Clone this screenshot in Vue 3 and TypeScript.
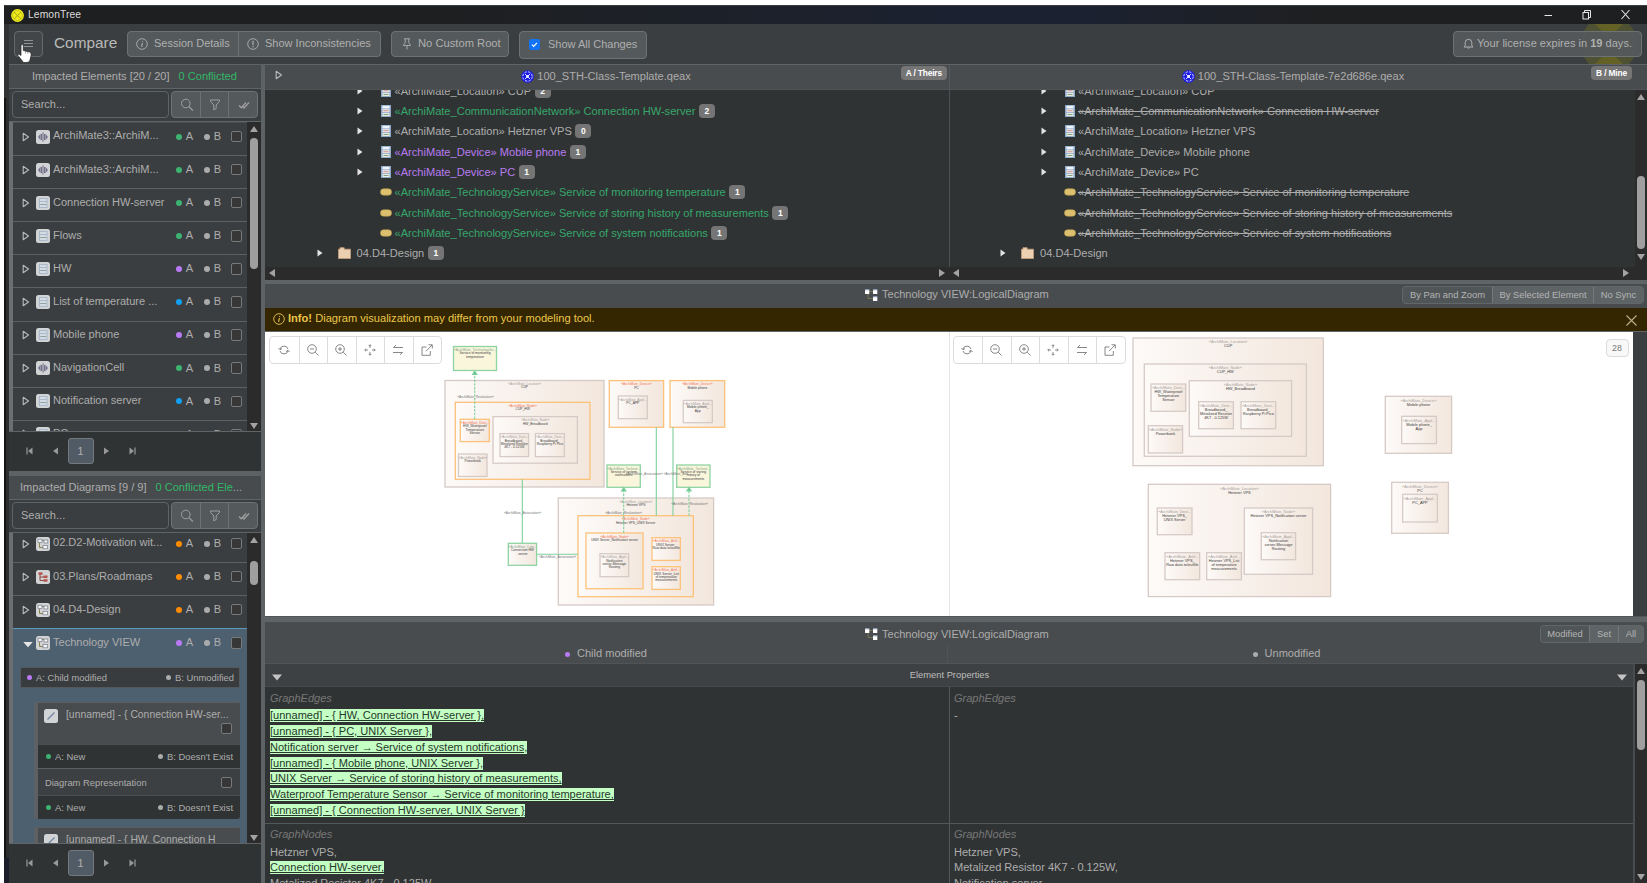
<script setup lang="ts">
interface ListItem { label: string; kind: string; color: string }
interface TreeRow { label: string; kind: string; color: string; count?: number; gone?: boolean }
interface DiagramNode {
  x: number; y: number; w: number; h: number
  st: string; lines: string[]; tone?: string; fill?: string
}

const elements: ListItem[] = [
  { label: 'ArchiMate3::ArchiM...', kind: 'code', color: 'green' },
  { label: 'ArchiMate3::ArchiM...', kind: 'code', color: 'green' },
  { label: 'Connection HW-server', kind: 'doc', color: 'green' },
  { label: 'Flows', kind: 'doc', color: 'green' },
  { label: 'HW', kind: 'doc', color: 'purple' },
  { label: 'List of temperature ...', kind: 'doc', color: 'blue' },
  { label: 'Mobile phone', kind: 'doc', color: 'purple' },
  { label: 'NavigationCell', kind: 'code', color: 'green' },
  { label: 'Notification server', kind: 'doc', color: 'blue' },
  { label: 'PC', kind: 'doc', color: 'purple' },
]

const diagrams: ListItem[] = [
  { label: '02.D2-Motivation wit...', kind: 'dia', color: 'orange' },
  { label: '03.Plans/Roadmaps', kind: 'plan', color: 'orange' },
  { label: '04.D4-Design', kind: 'dia', color: 'orange' },
]

const treeA: TreeRow[] = [
  { label: '«ArchiMate_Location» CUP', kind: 'doc', color: 'grey', count: 2 },
  { label: '«ArchiMate_CommunicationNetwork» Connection HW-server', kind: 'doc', color: 'green', count: 2 },
  { label: '«ArchiMate_Location» Hetzner VPS', kind: 'doc', color: 'grey', count: 0 },
  { label: '«ArchiMate_Device» Mobile phone', kind: 'doc', color: 'purple', count: 1 },
  { label: '«ArchiMate_Device» PC', kind: 'doc', color: 'purple', count: 1 },
  { label: '«ArchiMate_TechnologyService» Service of monitoring temperature', kind: 'svc', color: 'green', count: 1 },
  { label: '«ArchiMate_TechnologyService» Service of storing history of measurements', kind: 'svc', color: 'green', count: 1 },
  { label: '«ArchiMate_TechnologyService» Service of system notifications', kind: 'svc', color: 'green', count: 1 },
  { label: '04.D4-Design', kind: 'folder', color: 'grey', count: 1 },
]
const treeB: TreeRow[] = treeA.map((r) => ({
  label: r.label, kind: r.kind, color: 'grey', gone: r.color === 'green',
}))
const trees = [treeA, treeB]

const loc = '«ArchiMate_Location»'
const node = '«ArchiMate_Node»'
const dev = '«ArchiMate_Device»'
const devS = '«ArchiMate_Devi...'
const appS = '«ArchiMate_Appl...'
const artS = '«ArchiMate_Artif...'

const nodesA: DiagramNode[] = [
  { x: 453.5, y: 346.5, w: 43, h: 24, st: '«ArchiMate_TechnologySe...', lines: ['Service of monitoring', 'temperature'], tone: 'new', fill: '#faf6dc' },
  { x: 445, y: 380.5, w: 159, h: 106.5, st: loc, lines: ['CUP'] },
  { x: 455.3, y: 402.3, w: 134.7, h: 77, st: node, lines: ['CUP_HW'], tone: 'mod' },
  { x: 460.3, y: 419.3, w: 29, h: 22.3, st: devS, lines: ['HW_Waterproof', 'Temperature', 'Sensor'], tone: 'mod' },
  { x: 458.5, y: 454, w: 28.5, h: 22.5, st: node, lines: ['Powerbank'] },
  { x: 493, y: 416.6, w: 84.4, h: 46.6, st: node, lines: ['HW_Breadboard'] },
  { x: 500, y: 433.6, w: 28.6, h: 23, st: devS, lines: ['Breadboard_', 'Metalized Resistor', '4K7 - 0.125W'] },
  { x: 535.4, y: 433.6, w: 29, h: 23, st: devS, lines: ['Breadboard_', 'Raspberry Pi Pico'] },
  { x: 609.3, y: 380.6, w: 54.3, h: 46.7, st: dev, lines: ['PC'], tone: 'mod' },
  { x: 618.3, y: 396, w: 29, h: 22.7, st: appS, lines: ['PC_APP'] },
  { x: 670, y: 380.6, w: 54.7, h: 46.7, st: dev, lines: ['Mobile phone'], tone: 'mod' },
  { x: 683.3, y: 400.4, w: 29, h: 22.3, st: appS, lines: ['Mobile phone_', 'App'] },
  { x: 508.3, y: 543.3, w: 28.3, h: 22, st: '«ArchiMate_Com...', lines: ['Connection HW', '-server'], tone: 'new' },
  { x: 558.3, y: 498, w: 155.3, h: 107, st: loc, lines: ['Hetzner VPS'] },
  { x: 578, y: 515.7, w: 115.3, h: 81, st: node, lines: ['Hetzner VPS_UNIX Server'], tone: 'mod' },
  { x: 586, y: 533, w: 57, h: 55.7, st: node, lines: ['UNIX Server_Notification server'], tone: 'mod' },
  { x: 600, y: 553.7, w: 28.7, h: 23, st: appS, lines: ['Notification', 'server-Message', 'Routing'] },
  { x: 652, y: 537.7, w: 28.3, h: 22.7, st: artS, lines: ['UNIX Server_', 'Raw data to/outfile'], tone: 'mod' },
  { x: 652, y: 566.7, w: 28.3, h: 22.7, st: artS, lines: ['UNIX Server_List', 'of temperature', 'measurements'], tone: 'mod' },
  { x: 607, y: 465, w: 33.3, h: 22.3, st: '«ArchiMate_Technol...', lines: ['Service of system', 'notifications'], tone: 'new', fill: '#faf6dc' },
  { x: 676.7, y: 465, w: 33.3, h: 22.3, st: '«ArchiMate_Technol...', lines: ['Service of storing', 'history of', 'measurements'], tone: 'new', fill: '#faf6dc' },
]

const nodesB: DiagramNode[] = [
  { x: 1133, y: 338, w: 190.3, h: 127.7, st: loc, lines: ['CUP'] },
  { x: 1144.3, y: 364, w: 162, h: 92.3, st: node, lines: ['CUP_HW'] },
  { x: 1151, y: 384, w: 34.7, h: 27.3, st: devS, lines: ['HW_Waterproof', 'Temperature', 'Sensor'] },
  { x: 1148.3, y: 425.7, w: 34.3, h: 27.3, st: node, lines: ['Powerbank'] },
  { x: 1189.3, y: 380.7, w: 102.3, h: 55.7, st: node, lines: ['HW_Breadboard'] },
  { x: 1198.7, y: 401.7, w: 34.7, h: 27, st: devS, lines: ['Breadboard_', 'Metalized Resistor', '4K7 - 0.125W'] },
  { x: 1241, y: 401.7, w: 34.7, h: 27, st: devS, lines: ['Breadboard_', 'Raspberry Pi Pico'] },
  { x: 1385.3, y: 396.3, w: 66.3, h: 57, st: dev, lines: ['Mobile phone'] },
  { x: 1401.7, y: 416.3, w: 34.7, h: 27.3, st: appS, lines: ['Mobile phone_', 'App'] },
  { x: 1148.3, y: 484.3, w: 182.3, h: 112.3, st: loc, lines: ['Hetzner VPS'] },
  { x: 1157.3, y: 508, w: 34.7, h: 26.7, st: devS, lines: ['Hetzner VPS_', 'UNIX Server'] },
  { x: 1244.3, y: 508, w: 68.3, h: 66.3, st: node, lines: ['Hetzner VPS_Notification server'] },
  { x: 1261.3, y: 532.7, w: 34.3, h: 27, st: appS, lines: ['Notification', 'server-Message', 'Routing'] },
  { x: 1165, y: 552.7, w: 34.7, h: 27, st: artS, lines: ['Hetzner VPS_', 'Raw data to/outfile'] },
  { x: 1206.7, y: 552.7, w: 34.7, h: 27, st: artS, lines: ['Hetzner VPS_List', 'of temperature', 'measurements'] },
  { x: 1391.7, y: 482.3, w: 56.7, h: 51, st: dev, lines: ['PC'] },
  { x: 1402.7, y: 494.3, w: 34.7, h: 27.7, st: appS, lines: ['PC_APP'] },
]
const canvases = [
  { box: '265 332 685 284', nodes: nodesA, size: 3.3, step: 3.3, first: 4.6 },
  { box: '950 332 685 284', nodes: nodesB, size: 3.9, step: 4, first: 5.4 },
]

const edgeLabels = [
  { x: 475.5, y: 397.5, t: '«ArchiMate_Realization»' },
  { x: 522.5, y: 514, t: '«ArchiMate_Association»' },
  { x: 557.5, y: 557.5, t: '«ArchiMate_Association»' },
  { x: 658, y: 474.5, t: '«ArchiMate_Association» «ArchiMate_Ass...' },
  { x: 623.5, y: 513.5, t: '«ArchiMate_Realization»' },
  { x: 689.5, y: 505, t: '«ArchiMate_Realization»' },
]

const stroke: Record<string, string> = { new: '#8fd3a3', mod: '#fcc27a', none: '#d6cac6' }
const stTone: Record<string, string> = { new: '#7fa487', mod: '#f4714f', none: '#a7a09c' }

const edges = [
  '[unnamed] - { HW, Connection HW-server },',
  '[unnamed] - { PC, UNIX Server },',
  'Notification server → Service of system notifications,',
  '[unnamed] - { Mobile phone, UNIX Server },',
  'UNIX Server → Service of storing history of measurements,',
  'Waterproof Temperature Sensor → Service of monitoring temperature,',
  '[unnamed] - { Connection HW-server, UNIX Server }',
]
</script>

<template>
  <div class="page">
    <svg width="0" height="0" class="defs">
      <defs>
        <linearGradient id="sand"><stop offset="0" stop-color="#fdfaf8" /><stop offset="0.45" stop-color="#f8f1ec" /><stop offset="1" stop-color="#f3e7dd" /></linearGradient>
        <symbol id="i-doc" viewBox="0 0 10 12"><rect x="0" y="0" width="10" height="12" fill="#8fabcb" /><rect x="1.500" y="0.800" width="7" height="2.600" fill="#eef5fa" /><rect x="1.500" y="4.200" width="7" height="3" fill="#f0e4e0" /><rect x="2.500" y="5.200" width="5" height="1" fill="#c99" /><rect x="1.500" y="8" width="7" height="3" fill="#e6efe0" /><rect x="2.500" y="9" width="5" height="1" fill="#8a9a88" /></symbol>
        <symbol id="i-svc" viewBox="0 0 12 8"><rect x="0.500" y="0.800" width="11" height="6.400" rx="3" fill="#dcc070" stroke="#b99c4c" stroke-width=".6" /></symbol>
        <symbol id="i-folder" viewBox="0 0 13 12"><path d="M0.500 11.500V2.200H2V.7H6.200V2.200H12.500V11.500Z" fill="#ecd0b2" stroke="#c89f7c" stroke-width=".8" /></symbol>
        <symbol id="k-code" viewBox="0 0 14 14"><rect width="14" height="14" rx="2.500" fill="#d2d3d5" /><path d="M4.600 3.400 2 7l2.600 3.600ZM9.400 3.400 12 7l-2.600 3.600Z" fill="#77748f" /><path d="M7 2.300V11.700M5.500 4V10M8.500 4V10" stroke="#55546f" stroke-width=".8" /></symbol>
        <symbol id="k-doc" viewBox="0 0 14 14"><rect width="14" height="14" rx="2.500" fill="#d2d3d5" /><rect x="3" y="2" width="8.500" height="10" fill="#a9b9cb" /><path d="M4 4h6.500M4 7h6.500M4 10h6.500" stroke="#dfe7ea" stroke-width="1.500" /><path d="M4.500 8.500h5.500" stroke="#8b9a90" stroke-width=".8" /></symbol>
        <symbol id="k-dia" viewBox="0 0 14 14"><rect width="14" height="14" rx="2.500" fill="#d2d3d5" /><path d="M3.500 6V10.500H7M5 3.500H9" stroke="#8a8450" fill="none" /><rect x="2" y="2.200" width="4" height="3.200" fill="#f4f4f4" stroke="#767d8a" stroke-width=".7" /><rect x="8" y="3" width="3.800" height="3" fill="#f4f4f4" stroke="#767d8a" stroke-width=".7" /><rect x="7" y="8.500" width="4.500" height="3.300" fill="#f4f4f4" stroke="#767d8a" stroke-width=".7" /></symbol>
        <symbol id="k-plan" viewBox="0 0 14 14"><rect width="14" height="14" rx="2.500" fill="#d2d3d5" /><path d="M4 4V10.500H8M4 7H8" stroke="#8d4a42" fill="none" /><rect x="2.500" y="2.300" width="4" height="2.500" fill="#b5544a" /><rect x="7.500" y="5.500" width="4" height="2.500" fill="#b5544a" /><rect x="7.500" y="9.200" width="4" height="2.500" fill="#b5544a" /></symbol>
        <symbol id="k-line" viewBox="0 0 14 14"><rect width="14" height="14" rx="2.500" fill="#d2d3d5" /><path d="M3.500 10.500 10.500 3.500" stroke="#6f84a4" stroke-width="1.200" /></symbol>
        <symbol id="i-caret" viewBox="0 0 8 10"><path d="M1.200 1.300 6.500 5 1.200 8.700Z" fill="none" stroke="#b9b9b9" stroke-width="1.100" stroke-linejoin="round" /></symbol>
        <symbol id="i-tri" viewBox="0 0 6 8"><path d="M.5.500 5.500 4 .5 7.500Z" fill="#e3e3e3" /></symbol>
        <symbol id="i-ea" viewBox="0 0 13 13"><circle cx="6.500" cy="6.500" r="6.300" fill="#1a1ae0" /><g fill="none" stroke="#dcdcff" stroke-width="1"><circle cx="6.500" cy="6.500" r="4.700" stroke-dasharray="2.400 1.300" /><path d="M4 4 9 9M9 4 4 9" /></g><circle cx="6.500" cy="6.500" r="1.400" fill="#f0f0ff" /></symbol>
        <symbol id="i-tree" viewBox="0 0 13 13"><path d="M3 4V9.500H8M4 2.500H8" stroke="#8a8552" fill="none" stroke-width=".7" /><rect x="0" y="0.500" width="4.300" height="4.500" fill="#fff" /><rect x="8" y="0.500" width="4.300" height="4.500" fill="#fff" /><rect x="8" y="7.500" width="4.300" height="4.500" fill="#fff" /><path d="M0 .8H4.300M8 .8H12.300M8 7.800H12.300" stroke="#7b8fb5" stroke-width=".8" /></symbol>
        <symbol id="i-lemon" viewBox="0 0 14 14"><circle cx="7" cy="7" r="6.900" fill="#f2ee1c" /><circle cx="7" cy="7" r="5.200" fill="none" stroke="#b8b515" stroke-width=".8" /><path d="M3.400 3.400 10.600 10.600M10.600 3.400 3.400 10.600" stroke="#b8b515" stroke-width="1.200" /></symbol>
        <symbol id="i-search" viewBox="0 0 14 14"><circle cx="5.800" cy="5.500" r="4.300" fill="none" stroke="currentColor" stroke-width="1" /><path d="m9 8.700 3.800 3.800" stroke="currentColor" stroke-width="1.200" /></symbol>
        <symbol id="i-funnel" viewBox="0 0 12 12"><path d="M1.500 1H10.500V2.300L7.200 6V9.500L4.800 10.800V6L1.500 2.300Z" fill="none" stroke="currentColor" stroke-width="1" /></symbol>
        <symbol id="i-checks" viewBox="0 0 12 10"><path d="m1 5.500 2.300 2.300L8 2.500M4.500 6.500 6 8 11 2.500" fill="none" stroke="currentColor" stroke-width="1.300" /></symbol>
        <symbol id="i-info" viewBox="0 0 12 12"><circle cx="6" cy="6" r="5.300" fill="none" stroke="currentColor" stroke-width=".9" /><path d="M6.400 5 5.600 8.800M6.600 3 6.500 3.900" stroke="currentColor" stroke-width="1.100" /></symbol>
        <symbol id="i-warn" viewBox="0 0 12 12"><circle cx="6" cy="6" r="5.300" fill="none" stroke="currentColor" stroke-width=".9" /><path d="M6 2.800V7M6 8V9.200" stroke="currentColor" stroke-width="1.200" /></symbol>
        <symbol id="i-pin" viewBox="0 0 10 12"><path d="M2 .8H8M3.200 1V5L1.500 6.800V7.500H8.500V6.800L6.800 5V1M5 7.500V11.500" fill="none" stroke="currentColor" stroke-width=".9" /></symbol>
        <symbol id="i-bell" viewBox="0 0 11 12"><path d="M1 9H10L8.800 7.300V4.600A3.300 3.300 0 0 0 2.200 4.600V7.300ZM4.300 9.500A1.300 1.300 0 0 0 6.700 9.500" fill="none" stroke="currentColor" stroke-width="1" /></symbol>
      </defs>
    </svg>

    <div class="edge"><i class="e1"></i><i class="e2"></i><i class="e3"></i></div>

    <div class="window">
      <div class="titlebar">
        <svg class="logo"><use href="#i-lemon" /></svg>
        <span class="apptitle">LemonTree</span>
        <svg class="wc" viewBox="0 0 90 14" fill="none" stroke="#e6e6e6">
          <path d="M.5 7.500H8" stroke-width="1" /><rect x="39" y="4.500" width="5.500" height="6.500" /><path d="M40.500 4.500V2.500H46.500V9.500H44.500" /><path d="m77.500 2 8 9M85.500 2l-8 9" stroke-width="1.100" />
        </svg>
      </div>

      <div class="toolbar">
        <svg class="wedge" viewBox="0 0 56 40"><path d="M8 0H48Q56 8 56 20T48 40H8Q0 32 0 20T8 0Z" fill="#4f5133" /><path d="M14 0H42L28 14ZM14 40H42L28 26Z" fill="#646127" /></svg>
        <button class="burger"><svg viewBox="0 0 9 9" stroke="#8f9294"><path d="M0 1.500H9M0 4.500H9M0 7.500H9" /></svg></button>
        <span class="pagetitle">Compare</span>
        <div class="group g1">
          <button class="b-sess"><svg class="ic12"><use href="#i-info" /></svg>Session Details</button>
          <button class="b-inc"><svg class="ic12"><use href="#i-warn" /></svg>Show Inconsistencies</button>
        </div>
        <button class="solo b-root"><svg class="pin"><use href="#i-pin" /></svg>No Custom Root</button>
        <button class="solo b-all"><svg class="bluecheck" viewBox="0 0 11 11"><rect width="11" height="11" rx="2" fill="#1273f5" /><path d="m3 5.700 1.700 1.700 3.300-3.600" fill="none" stroke="#fff" stroke-width="1.200" /></svg>Show All Changes</button>
        <button class="solo b-lic"><svg class="bell"><use href="#i-bell" /></svg><span>Your license expires in <b>19</b> days.</span></button>
        <svg class="hand" viewBox="0 0 15 19"><path d="M4 1Q5.500-.2 6.300 1.500V6.500L12.500 8Q14.500 8.600 14.200 11L13 16Q12.500 18.500 10 18.500H6.500L1 11.500Q.3 9.800 2 10L4 11.500Z" fill="#fff" stroke="#222" stroke-width=".7" /><path d="M8.500 7V9.500M10.700 7.500V9.800" stroke="#777" stroke-width=".6" /></svg>
      </div>

      <div class="body">
        <aside>
          <section v-for="p in [0, 1]" :key="p" :class="['panel', p ? 'lower' : 'upper']">
            <header v-if="!p">Impacted Elements [20 / 20]<em>0 Conflicted</em></header>
            <header v-else>Impacted Diagrams [9 / 9]<em>0 Conflicted Ele<s>...</s></em></header>
            <div class="search">
              <div class="field">Search...</div>
              <div class="tools">
                <span><svg class="ic14"><use href="#i-search" /></svg></span>
                <span><svg class="ic12"><use href="#i-funnel" /></svg></span>
                <span><svg class="ic12"><use href="#i-checks" /></svg></span>
              </div>
            </div>
            <div class="listwrap">
              <div class="list">
                <div v-for="(it, i) in p ? diagrams : elements" :key="i" class="item">
                  <svg class="caret"><use href="#i-caret" /></svg>
                  <svg class="kind"><use :href="'#k-' + it.kind" /></svg>
                  <span class="label">{{ it.label }}</span>
                  <i :class="['dot', it.color]"></i><span class="ab">A</span>
                  <i class="dot grey"></i><span class="ab">B</span>
                  <i class="box"></i>
                </div>
                <div v-if="p" class="selected">
                  <div class="item">
                    <svg class="open" viewBox="0 0 10 6"><path d="M.3.500H9.700L5 5.700Z" fill="#e6e6e6" /></svg>
                    <svg class="kind"><use href="#k-dia" /></svg>
                    <span class="label">Technology VIEW</span>
                    <i class="dot purple"></i><span class="ab">A</span>
                    <i class="dot grey"></i><span class="ab">B</span>
                    <i class="box"></i>
                  </div>
                  <div class="state main"><i class="dot purple"></i>A: Child modified<span></span><i class="dot grey"></i>B: Unmodified</div>
                  <div class="card">
                    <div class="cardhead">
                      <svg class="kind"><use href="#k-line" /></svg>
                      <span class="ctitle">[unnamed] - { Connection HW-ser...</span>
                      <i class="box"></i>
                    </div>
                    <div class="state"><i class="dot green"></i>A: New<span></span><i class="dot grey"></i>B: Doesn't Exist</div>
                    <div class="rep">Diagram Representation<i class="box"></i></div>
                    <div class="state"><i class="dot green"></i>A: New<span></span><i class="dot grey"></i>B: Doesn't Exist</div>
                  </div>
                  <div class="card">
                    <div class="cardhead">
                      <svg class="kind"><use href="#k-line" /></svg>
                      <span class="ctitle">[unnamed] - { HW, Connection H</span>
                    </div>
                  </div>
                </div>
              </div>
              <div class="vbar"><i class="up"></i><i class="thumb"></i><i class="down"></i></div>
            </div>
            <div class="pager">
              <svg viewBox="0 0 7 8"><path d="M1 .5V7.500" stroke="#999" stroke-width="1.200" /><path d="M6.500.5V7.500L2 4Z" fill="#999" /></svg>
              <svg viewBox="0 0 7 8"><path d="M6 .5V7.500L1 4Z" fill="#999" /></svg>
              <b>1</b>
              <svg viewBox="0 0 7 8"><path d="M1 .5V7.500L6 4Z" fill="#999" /></svg>
              <svg viewBox="0 0 7 8"><path d="M6 .5V7.500" stroke="#999" stroke-width="1.200" /><path d="M.5.5V7.500L5 4Z" fill="#999" /></svg>
            </div>
          </section>
        </aside>

        <main>
          <section class="trees">
            <div class="treehead">
              <div><svg class="caret"><use href="#i-caret" /></svg><svg class="ea"><use href="#i-ea" /></svg>100_STH-Class-Template.qeax<span class="side">A / Theirs</span></div>
              <div><svg class="ea"><use href="#i-ea" /></svg>100_STH-Class-Template-7e2d686e.qeax<span class="side">B / Mine</span></div>
            </div>
            <div class="treebody">
              <div v-for="(t, k) in trees" :key="k" class="tree">
                <div v-for="(r, i) in t" :key="i" :class="['trow', r.kind]">
                  <svg class="tri"><use v-if="r.kind !== 'svc'" href="#i-tri" /></svg>
                  <svg class="ticon"><use :href="'#i-' + r.kind" /></svg>
                  <span :class="['tl', 't-' + r.color, { gone: r.gone }]">{{ r.label }}</span>
                  <span v-if="r.count !== undefined" class="count">{{ r.count }}</span>
                </div>
              </div>
              <div class="vbar"><i class="up"></i><i class="thumb"></i><i class="down"></i></div>
            </div>
            <div class="hbars">
              <div><i class="lft"></i><i class="rgt"></i></div>
              <div><i class="lft"></i><i class="rgt"></i></div>
              <span></span>
            </div>
          </section>

          <section class="diagram">
            <div class="dhead">
              <svg class="ea"><use href="#i-tree" /></svg>Technology VIEW:LogicalDiagram
              <div class="seg s1"><b>By Pan and Zoom</b><span>By Selected Element</span><span>No Sync</span></div>
            </div>
            <div class="info"><svg class="ic12"><use href="#i-info" /></svg><b>Info!</b>&nbsp;Diagram visualization may differ from your modeling tool.
              <svg class="x" viewBox="0 0 11 11"><path d="m.5.500 10 10M10.500.5l-10 10" stroke="#b9b08d" stroke-width="1.100" /></svg>
            </div>
            <div class="canvases">
              <div v-for="(c, k) in canvases" :key="k" class="canvas">
                <svg class="draw" :viewBox="c.box" width="685" height="284">
                  <g v-for="(n, i) in c.nodes" :key="i" text-anchor="middle" :font-size="c.size">
                    <rect :x="n.x" :y="n.y" :width="n.w" :height="n.h" :fill="n.fill || 'url(#sand)'" :stroke="stroke[n.tone || 'none']" stroke-width="1.300" />
                    <text :x="n.x + n.w / 2" :y="n.y + c.first" :fill="stTone[n.tone || 'none']">{{ n.st }}</text>
                    <text v-for="(l, j) in n.lines" :key="j" :x="n.x + n.w / 2" :y="n.y + c.first + c.step * (j + 1)" fill="#3c3c3c">{{ l }}</text>
                  </g>
                  <g v-if="!k" fill="none" stroke="#7fcf9c" stroke-width="1.100">
                    <path d="M522.300 479.300V543.300M536.700 554.300H578M656.300 427.300V515.700M673 427.300V515.700" />
                    <path d="M474.700 419V374M623.700 533V491M689 515.700V491" stroke-dasharray="2.500 1.200" />
                    <path d="M472.500 374.500 474.700 371 476.900 374.500ZM621.500 491 623.700 487.500 625.900 491ZM686.800 491 689 487.500 691.200 491Z" fill="#5fc586" />
                  </g>
                  <g v-if="!k" font-size="3.300" fill="#777" text-anchor="middle"><text v-for="(e, i) in edgeLabels" :key="i" :x="e.x" :y="e.y">{{ e.t }}</text></g>
                </svg>
                <div class="ctools">
                  <span><svg viewBox="0 0 12 12"><path d="M2 5A4.200 4.200 0 0 1 10 5M10 7A4.200 4.200 0 0 1 2 7M.5 4 2 5.800 4 4.400M11.500 8 10 6.200 8 7.600" /></svg></span>
                  <span><svg viewBox="0 0 12 12"><circle cx="5" cy="5" r="4.300" /><path d="m8.200 8.200 3.300 3.300M3 5H7" /></svg></span>
                  <span><svg viewBox="0 0 12 12"><circle cx="5" cy="5" r="4.300" /><path d="m8.200 8.200 3.300 3.300M3 5H7M5 3V7" /></svg></span>
                  <span><svg viewBox="0 0 12 12"><path d="M6 1V4M6 8V11M1 6H4M8 6H11M4.700 2 6 .7 7.300 2M4.700 10 6 11.300 7.300 10M2 4.700.7 6 2 7.300M10 4.700 11.300 6 10 7.300" /></svg></span>
                  <span><svg viewBox="0 0 12 12"><path d="M11 3.500H1.500L4 1.200M1 8.500H10.500L8 10.800" /></svg></span>
                  <span><svg viewBox="0 0 12 12"><path d="M5.500 3H1V11.300H9.300V7M7.500.8H11.300V4.500M11 1 5 7.200" /></svg></span>
                </div>
                <div v-if="k" class="n28">28</div>
              </div>
              <div class="gutter"></div>
            </div>
          </section>

          <section class="props">
            <div class="phead">
              <div class="ptitle"><svg class="ea"><use href="#i-tree" /></svg>Technology VIEW:LogicalDiagram
                <div class="seg s2"><b>Modified</b><span>Set</span><span>All</span></div>
              </div>
              <div class="pstates"><div><i class="dot purple"></i>Child modified</div><div><i class="dot grey"></i>Unmodified</div></div>
            </div>
            <div class="pbody">
              <div class="pgrid">
                <div class="sect"><svg viewBox="0 0 10 7"><path d="M0 .5H10L5 6.500Z" fill="#c4c4c4" /></svg><span>Element Properties</span><svg viewBox="0 0 10 7"><path d="M0 .5H10L5 6.500Z" fill="#c4c4c4" /></svg></div>
                <div class="prow r1">
                  <div><h4>GraphEdges</h4><p v-for="e in edges" :key="e"><ins>{{ e }}</ins></p></div>
                  <div><h4>GraphEdges</h4><p>-</p></div>
                </div>
                <div class="prow r2">
                  <div><h4>GraphNodes</h4><p>Hetzner VPS,</p><p><ins>Connection HW-server,</ins></p><p>Metalized Resistor 4K7 - 0.125W,</p></div>
                  <div><h4>GraphNodes</h4><p>Hetzner VPS,</p><p>Metalized Resistor 4K7 - 0.125W,</p><p>Notification server,</p></div>
                </div>
              </div>
              <div class="vbar"><i class="up"></i><i class="thumb"></i><i class="down"></i></div>
            </div>
          </section>
        </main>
      </div>
    </div>
  </div>
</template>

<style>
html, body { margin: 0; background: #fff; overflow: hidden; }
</style>

<style scoped>
* { box-sizing: border-box; }
svg { display: block; flex: none; }
.defs { position: absolute; }
.page { width: 1647px; height: 883px; padding: 5px 0 0 4px; position: relative; overflow: hidden; background: #fff; font: 11.050px/1.2 "Liberation Sans", Arial, sans-serif; color: #adadad; }
.edge { position: absolute; left: 4px; top: 24px; width: 5px; display: flex; flex-direction: column; }
.edge i { display: block; }
.e1 { height: 74px; background: #303233; }
.e2 { height: 760px; background: linear-gradient(90deg, #141414 0 2px, #2c2d2e 2px); }
.e3 { height: 25px; background: #1b1e2a; }
.window { display: flex; flex-direction: column; height: 878px; }
.titlebar { height: 19px; background: linear-gradient(90deg, #1e1f20 25%, #1b2130 58%, #1b2130 66%, #1e1f21 80%); border-top: 1px solid #3a3d3f; display: flex; align-items: center; padding-left: 7px; color: #dcdcdc; font-size: 10.300px; }
.logo { width: 13px; height: 13px; margin-right: 4px; }
.wc { width: 90px; height: 14px; margin-left: auto; margin-right: 13px; }
.toolbar { position: relative; height: 40px; margin-left: 5px; background: #3b3e40; display: flex; align-items: flex-start; padding: 7px 5px 0 5px; }
button { font: inherit; font-size: 11px; color: #b0b0b0; background: #54595b; border: 1px solid #6d7274; margin: 0; display: flex; align-items: center; height: 26px; padding: 0 0 1px; }
.ic12 { width: 12px; height: 12px; }
.ic14 { width: 14px; height: 14px; }
.burger { width: 29px; border-radius: 4px; background: #424648; border-color: #65696b; justify-content: center; }
.burger svg { width: 9px; height: 9px; margin-top: -1px; }
.pagetitle { font-size: 15.400px; margin-left: 11px; width: 73px; line-height: 24px; color: #b9b9b9; }
.group { display: flex; }
.b-sess { width: 112px; border-radius: 4px 0 0 4px; padding-left: 8px; gap: 6px; }
.b-inc { width: 142px; border-left: 0; border-radius: 0 4px 4px 0; padding-left: 8px; gap: 6px; }
.solo { border-radius: 4px; }
.b-root { width: 118px; margin-left: 10px; padding-left: 10px; gap: 6px; font-size: 11.200px; }
.pin { width: 10px; height: 12px; }
.b-all { width: 128px; height: 28px; margin-left: 10px; padding-left: 9px; gap: 8px; }
.bluecheck { width: 11px; height: 11px; }
.b-lic { width: 189px; margin-left: auto; padding-left: 9px; gap: 3px; position: relative; font-size: 11.050px; background: #54595bf2; white-space: nowrap; }
.bell { width: 11px; height: 12px; }
.wedge { position: absolute; right: 10px; top: 0; width: 56px; height: 40px; }
.hand { position: absolute; left: 8px; top: 20px; width: 15px; height: 19px; }
.body { display: flex; flex: 1; margin-left: 5px; min-height: 0; }
aside { width: 256px; flex: none; border-right: 4px solid #5d6265; background: #3b3e40; }
.panel { display: flex; flex-direction: column; }
.upper { height: 412px; border-bottom: 5px solid #5d6265; }
.lower { height: 407px; }
.panel header { height: 25px; border-top: 1px solid #5f6466; border-bottom: 1px solid #5f6466; background: #484b4d; display: flex; align-items: center; padding-left: 23px; white-space: nowrap; flex: none; }
.lower header { height: 24px; border-top: 0; padding-left: 11px; }
header em { font-style: normal; color: #30b869; margin-left: 9px; }
header em s { text-decoration: none; color: #9aa; }
.search { display: flex; height: 32px; padding: 2px 3px 0 3px; gap: 2px; flex: none; }
.field { width: 158px; height: 27px; border: 1px solid #5e6365; border-radius: 4px; padding-left: 8px; line-height: 25px; }
.tools { width: 87px; height: 27px; display: flex; border: 1px solid #6d7274; border-radius: 4px; background: #54595b; color: #a0a0a0; }
.tools span { flex: 1; display: flex; align-items: center; justify-content: center; border-left: 1px solid #6d7274; padding-left: 1px; }
.tools span:first-child { border-left: 0; }
.listwrap { flex: 1; min-height: 0; display: flex; border-top: 1px solid #5f6466; overflow: hidden; }
.list { width: 239px; overflow: hidden; border-left: 4px solid #6b6f71; }
.lower .list .item:first-child:not(.selected .item) { margin-top: -4px; }
.item { height: 33.100px; border-top: 1px solid #5c6163; display: flex; align-items: center; padding: 0 5px 5px 9px; }
.upper .item:first-child { border-top-color: #4a4e50; }
.caret { width: 8px; height: 10px; }
.kind { width: 14px; height: 14px; margin-left: 6px; }
.label { width: 124px; margin-left: 3px; white-space: nowrap; padding-bottom: 1px; }
.dot { display: block; width: 6px; height: 6px; border-radius: 50%; flex: none; }
.green { background: #3cb371; } .purple { background: #b97af5; } .blue { background: #13a0f2; } .orange { background: #ff8c00; } .grey { background: #ababab; }
.ab { width: 18px; margin-left: 4px; }
.box { display: block; width: 11.500px; height: 11.500px; border: 1px solid #77797a; border-radius: 2px; background: #373737; flex: none; }
.ab + .box { margin-left: -1px; }
.vbar { width: 12px; background: #2b2b2b; display: flex; flex-direction: column; align-items: center; flex: none; }
.vbar .up, .vbar .down { width: 0; border: 4px solid transparent; border-top: 0; border-bottom: 6px solid #a3a3a3; }
.vbar .down { border-bottom: 0; border-top: 6px solid #a3a3a3; }
.vbar .thumb { width: 8px; border-radius: 4px; background: #9f9f9f; }
aside .vbar { width: 14px; }
.upper .vbar { padding-top: 4px; } .upper .thumb { margin-top: 6px; height: 131px; } .upper .down { margin-top: 154px; }
.lower .vbar { padding-top: 4px; } .lower .thumb { margin-top: 18px; height: 24px; } .lower .down { margin-top: 250px; }
.pager { height: 40px; border-top: 1px solid #5f6466; background: #303334; display: flex; align-items: center; padding: 0 0 1px 17px; flex: none; }
.pager svg { width: 7px; height: 8px; }
.pager svg:nth-of-type(2) { margin: 0 8.500px 0 19px; }
.pager svg:nth-of-type(3) { margin: 0 19px 0 9px; }
.pager b { width: 26px; height: 26px; border: 1px solid #74797d; border-radius: 3px; background: #515b65; text-align: center; line-height: 24px; font-weight: normal; font-size: 11.500px; }
.selected { background: #4d6070; height: 240px; }
.selected .item { border-top: 1px solid #5b9ab8; height: 39px; padding-bottom: 11px; }
.open { width: 10px; height: 7px; margin: 4px -3px 0 1px; }
.open + .kind { margin-left: 6px; }
.state { height: 24px; display: flex; align-items: center; background: #303334; font-size: 9.400px; padding: 0 7px 0 8px; border-top: 1px solid #4a4e50; }
.state span { flex: 1; }
.state .dot { width: 5px; height: 5px; margin-right: 4px; }
.state.main { height: 21px; margin: 0 7px 14px 7px; background: #393c3e; border: 1px solid #54585a; border-radius: 2px; padding: 0 5px 0 6px; }
.card { margin: 0 7px 8px 21px; border-left: 4px solid #5d6163; border-radius: 3px; overflow: hidden; }
.cardhead { height: 42px; background: #494c4e; display: flex; flex-wrap: wrap; align-items: flex-start; align-content: flex-start; padding-top: 6px; border-top: 1px solid #5b5f61; }
.ctitle { margin-left: 8px; width: 170px; white-space: nowrap; font-size: 10.350px; }
.cardhead .box { margin: 0 8px 0 auto; width: 11px; height: 11px; }
.rep { height: 27px; background: #3d4042; display: flex; align-items: center; justify-content: space-between; padding: 0 8px 0 7px; border-top: 1px solid #5b5f61; font-size: 9.400px; }
main { flex: 1; display: flex; flex-direction: column; min-width: 0; }
.trees { height: 220px; border-bottom: 4px solid #5f6466; background: #303334; display: flex; flex-direction: column; flex: none; }
.treehead { height: 26px; background: #494c4e; border-top: 1px solid #5f6466; border-bottom: 1px solid #505456; display: flex; flex: none; font-size: 11.050px; }
.treehead > div { width: 684px; position: relative; display: flex; align-items: center; justify-content: center; gap: 3px; padding: 0 2px 1px 0; }
.treehead > div + div { width: 698px; border-left: 1px solid #54595b; padding-right: 11px; }
.treehead .caret { position: absolute; left: 10px; top: 5px; }
.ea { width: 13px; height: 13px; }
.side { position: absolute; right: 2px; top: 1px; height: 14px; border-radius: 4px; background: #757575; color: #fff; font-weight: bold; font-size: 8.400px; line-height: 14px; padding: 0 5px; letter-spacing: -.15px; }
.treehead > div + div .side { right: 15px; }
.treebody { flex: 1; min-height: 0; display: flex; overflow: hidden; }
.tree { width: 684px; overflow: hidden; }
.tree + .tree { width: 686px; border-left: 1px solid #4d5153; }
.trow { height: 20.350px; display: flex; align-items: center; padding-left: 92px; font-size: 11.080px; white-space: nowrap; }
.trow:first-child { margin-top: -9.500px; }
.tree + .tree .trow { padding-left: 90.500px; }
.tri { width: 6px; height: 8px; margin-right: 18px; }
.ticon { width: 10px; height: 12px; margin-right: 3.500px; }
.svc .ticon { width: 12px; height: 8px; margin: 0 2.500px 0 -1px; }
.trow.folder { padding-left: 51.500px; }
.tree + .tree .trow.folder { padding-left: 50px; }
.folder .tri { margin-right: 15px; }
.folder .ticon { width: 13px; height: 12px; margin-right: 6px; }
.tl { padding-top: 1px; }
.t-green { color: #36a76b; } .t-purple { color: #b77bf0; }
.gone { text-decoration: line-through; }
.count { margin-left: 3.500px; width: 16px; height: 14px; border-radius: 4px; background: #757575; color: #fff; font: bold 8.500px/14px "Liberation Sans", sans-serif; text-align: center; }
.treebody .vbar { padding-top: 4px; }
.treebody .thumb { margin-top: 76px; height: 73px; } .treebody .down { margin-top: 5px; }
.hbars { height: 13px; background: #2b2b2b; display: flex; flex: none; padding-bottom: 1px; }
.hbars div { width: 684px; display: flex; justify-content: space-between; align-items: center; padding: 0 4px; }
.hbars i { width: 0; border: 4px solid transparent; border-left: 0; border-right: 6px solid #a3a3a3; }
.hbars .rgt { border-right: 0; border-left: 6px solid #a3a3a3; }
.diagram { height: 338px; border-bottom: 5px solid #5f6466; display: flex; flex-direction: column; flex: none; }
.dhead { height: 24px; background: #494c4e; display: flex; align-items: center; padding-left: 600px; gap: 4px; white-space: nowrap; flex: none; padding-bottom: 2px; }
.seg { display: flex; margin-left: auto; margin-right: 3px; height: 18px; font-size: 9.400px; border: 1px solid #62686a; border-radius: 4px; background: #5e6466; overflow: hidden; color: #b4b4b4; }
.seg b, .seg span { font-weight: normal; display: flex; align-items: center; justify-content: center; }
.seg b { background: #505557; }
.seg span { border-left: 1px solid #747a7c; }
.s1 b { width: 89px; } .s1 span { width: 101px; } .s1 span:last-child { width: 50px; }
.s2 b { width: 48px; } .s2 span { width: 29px; } .s2 span:last-child { width: 25px; }
.info { height: 24px; background: #332600; color: #ecc64d; display: flex; align-items: center; padding: 0 10px 1px 8px; flex: none; border-bottom: 1px solid #5f6466; white-space: nowrap; font-size: 11.120px; }
.info .ic12 { margin-right: 3px; }
.info .x { width: 11px; height: 11px; margin-left: auto; margin-top: 2px; }
.canvases { flex: 1; min-height: 0; display: flex; background: #fff; border-bottom: 1px solid #50565a; }
.canvas { width: 684px; position: relative; overflow: hidden; }
.canvas + .canvas { border-left: 1px solid #e4e4e4; }
.canvas + .canvas .ctools { left: 2.500px; }
.gutter { flex: 1; background: #3b3e40; }
.ctools { position: absolute; left: 4px; top: 4px; display: flex; height: 28px; border: 1px solid #dcdcdc; border-radius: 4px; background: #fff; }
.ctools span { width: 28.500px; display: flex; align-items: center; justify-content: center; border-left: 1px solid #dcdcdc; padding-right: 1px; }
.ctools span:first-child { border-left: 0; }
.ctools svg { width: 12px; height: 12px; fill: none; stroke: #6a6a6a; stroke-width: .8; }
.n28 { position: absolute; right: 4.500px; top: 7px; width: 23px; height: 18px; border: 1px solid #dcdcdc; border-radius: 4px; background: #f8f8f8; color: #777; text-align: center; font-size: 8.800px; line-height: 16px; }
.props { flex: 1; min-height: 0; display: flex; flex-direction: column; background: #303334; }
.phead { height: 42px; background: #494c4e; flex: none; border-bottom: 1px solid #505456; }
.ptitle { height: 22px; padding: 3px 0 0 600px; display: flex; align-items: center; gap: 4px; white-space: nowrap; }
.s2 { position: relative; top: -1px; }
.pstates { display: flex; height: 19px; }
.pstates div { width: 682px; display: flex; align-items: center; justify-content: center; gap: 7px; }
.pstates div + div { border-left: 1px solid #505456; padding-right: 4px; }
.pstates .dot { width: 5px; height: 5px; margin-top: 1px; }
.pbody { flex: 1; min-height: 0; display: flex; overflow: hidden; }
.pgrid { width: 1370px; overflow: hidden; border-right: 2px solid #484c4e; }
.pbody .vbar { padding-top: 4px; }
.pbody .thumb { margin-top: 6px; height: 70px; } .pbody .down { margin-top: 124px; }
.sect { height: 23px; background: #3e4143; border-bottom: 1px solid #45494b; display: flex; align-items: center; justify-content: space-between; padding: 1px 6px 0 7px; font-size: 9.350px; color: #bdbdbd; }
.sect svg { width: 10px; height: 7px; margin-top: 4px; }
.prow { display: flex; border-bottom: 1px solid #54585a; height: 136.500px; }
.prow > div { width: 685px; padding: 4.500px 5px; }
.prow > div + div { border-left: 1px solid #54585a; padding-left: 4px; }
h4 { font-weight: normal; font-style: italic; color: #777; margin: 0 0 3px; height: 13.500px; line-height: 13.500px; font-size: 11px; }
p { margin: 0; height: 15.850px; line-height: 15.850px; white-space: nowrap; }
ins { background: #c4ffc4; color: #26382a; padding: 0 0 1px; }
.apptitle { letter-spacing: .1px; }
</style>
